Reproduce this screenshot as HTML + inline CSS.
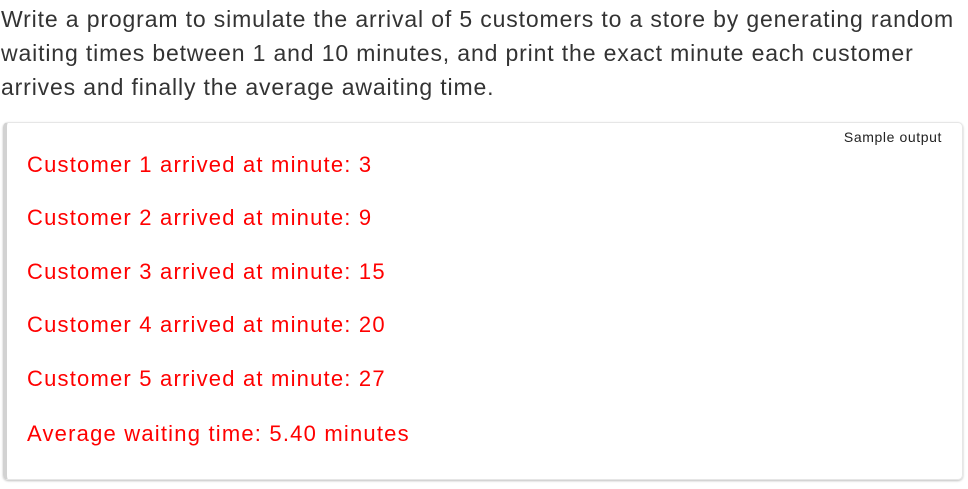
<!DOCTYPE html>
<html><head><style>
body{margin:0;width:968px;height:489px;background:#fff;font-family:"Liberation Sans",sans-serif;overflow:hidden;position:relative}
.t{position:absolute;left:1px;top:2px;width:990px;font-size:23px;line-height:34px;color:#333;letter-spacing:0.86px;white-space:nowrap}
.box{position:absolute;left:3px;top:122px;width:955px;height:356px;border:1px solid #e6e6e6;border-left:4px solid #d2d2d2;border-radius:5px;box-shadow:0 1px 2px rgba(0,0,0,.25)}
.s{position:absolute;right:20px;top:6px;font-size:14px;color:#222;letter-spacing:0.6px}
.r{position:absolute;left:20px;font-size:22px;color:#f00;letter-spacing:1.2px;white-space:nowrap}
</style></head><body>
<div class="t">Write a program to simulate the arrival of 5 customers to a store by generating random<br>waiting times between 1 and 10 minutes, and print the exact minute each customer<br>arrives and finally the average awaiting time.</div>
<div class="box">
<div class="s">Sample output</div>
<div class="r" style="top:29px">Customer 1 arrived at minute: 3</div>
<div class="r" style="top:82px">Customer 2 arrived at minute: 9</div>
<div class="r" style="top:136px">Customer 3 arrived at minute: 15</div>
<div class="r" style="top:189px">Customer 4 arrived at minute: 20</div>
<div class="r" style="top:243px">Customer 5 arrived at minute: 27</div>
<div class="r" style="top:298px">Average waiting time: 5.40 minutes</div>
</div>
</body></html>
